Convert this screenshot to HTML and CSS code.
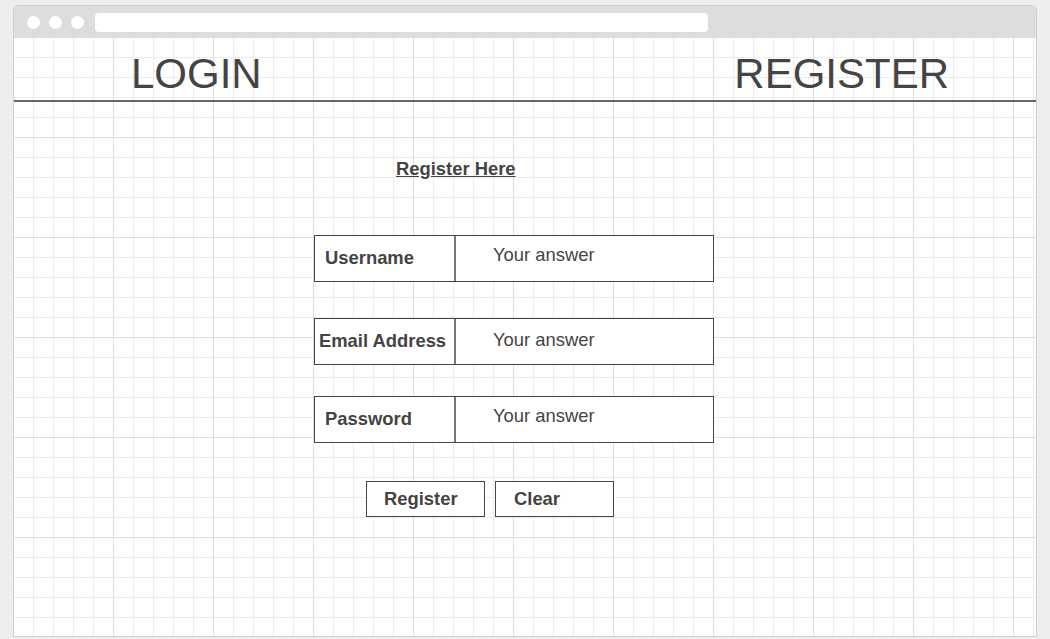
FILE: index.html
```html
<!DOCTYPE html>
<html lang="en">
<head>
<meta charset="utf-8">
<title>Register</title>
<link rel="stylesheet" href="styles.css">
</head>
<body>
<div class="window">
  <div class="titlebar">
    <span class="dot"></span>
    <span class="dot"></span>
    <span class="dot"></span>
    <div class="url"></div>
  </div>
  <div class="viewport">
    <nav class="topnav">
      <a class="nav-link" href="#">LOGIN</a>
      <a class="nav-link" href="#">REGISTER</a>
    </nav>
    <main class="form-area">
      <form class="reg-form">
        <h2 class="form-title"><a href="#">Register Here</a></h2>
        <div class="field field-first">
          <label class="field-label">Username</label>
          <input class="field-input" type="text" placeholder="Your answer">
        </div>
        <div class="field field-second">
          <label class="field-label field-label-tight">Email Address</label>
          <input class="field-input field-input-low" type="email" placeholder="Your answer">
        </div>
        <div class="field field-third">
          <label class="field-label">Password</label>
          <input class="field-input" type="password" placeholder="Your answer">
        </div>
        <div class="actions">
          <button class="btn" type="submit">Register</button>
          <button class="btn btn-clear" type="reset">Clear</button>
        </div>
      </form>
    </main>
  </div>
</div>
</body>
</html>
```

FILE: styles.css
```css
* {
  box-sizing: border-box;
}

html, body {
  margin: 0;
  height: 639px;
  overflow: hidden;
}

body {
  background: #eeeeee;
  padding: 5px 13px 0 13px;
  font-family: "Liberation Sans", Arial, sans-serif;
  color: #444444;
}

.window {
  width: 1024px;
  height: 632px;
  border: 1px solid #cfcfcf;
  border-radius: 5px 5px 0 0;
  display: flex;
  flex-direction: column;
  overflow: hidden;
  background: #ffffff;
}

.titlebar {
  height: 32px;
  flex: none;
  background: #dddddd;
  display: flex;
  align-items: center;
  padding-left: 13px;
  gap: 9px;
}

.dot {
  width: 13px;
  height: 13px;
  border-radius: 50%;
  background: #ffffff;
  flex: none;
}

.url {
  margin-left: 2px;
  width: 613px;
  height: 19px;
  border-radius: 4px;
  background: #ffffff;
}

.viewport {
  flex: 1;
  background-color: #ffffff;
  background-image:
    linear-gradient(to right, transparent 99px, #dedede 99px),
    linear-gradient(to bottom, transparent 99px, #dedede 99px),
    linear-gradient(to right, transparent 19px, #ececec 19px),
    linear-gradient(to bottom, transparent 19px, #ececec 19px);
  background-size: 100px 100px, 100px 100px, 20px 20px, 20px 20px;
}

.topnav {
  display: flex;
  justify-content: space-between;
  padding: 12px 87px 3px 117px;
  border-bottom: 2px solid #666666;
}

.nav-link {
  font-size: 42px;
  line-height: 47px;
  color: #444444;
  text-decoration: none;
}

.reg-form {
  width: 400px;
  margin-left: 300px;
}

.form-title {
  margin: 56px 0 56px 82px;
  font-size: 18.4px;
  line-height: 21px;
  font-weight: bold;
}

.form-title a {
  color: #444444;
  text-decoration: underline;
}

.field {
  display: flex;
  height: 47px;
  border: 1px solid #444444;
  background: #ffffff;
}

.field-second {
  margin-top: 36px;
}

.field-third {
  margin-top: 31px;
}

.field-label {
  width: 139px;
  flex: none;
  padding: 12px 0 0 10px;
  font-size: 18.4px;
  line-height: 20px;
  font-weight: bold;
  color: #444444;
}

.field-label-tight {
  padding-left: 4px;
}

.field-input {
  flex: 1;
  min-width: 0;
  height: 45px;
  margin: 0;
  border: none;
  border-left: 2px solid #777777;
  background: transparent;
  padding: 9px 0 16px 37px;
  font-family: inherit;
  font-size: 18.4px;
  line-height: 20px;
  color: #444444;
  outline: none;
}

.field-input-low {
  padding-top: 11px;
  padding-bottom: 14px;
}

.field-input::placeholder {
  color: #444444;
  opacity: 1;
}

.actions {
  display: flex;
  gap: 10px;
  margin-top: 38px;
  padding-left: 52px;
}

.btn {
  width: 119px;
  height: 36px;
  margin: 0;
  padding: 7px 0 7px 17px;
  border: 1px solid #444444;
  border-radius: 0;
  background: #ffffff;
  text-align: left;
  font-family: inherit;
  font-size: 18.4px;
  line-height: 20px;
  font-weight: bold;
  color: #444444;
}

.btn-clear {
  padding-left: 18px;
}
```
